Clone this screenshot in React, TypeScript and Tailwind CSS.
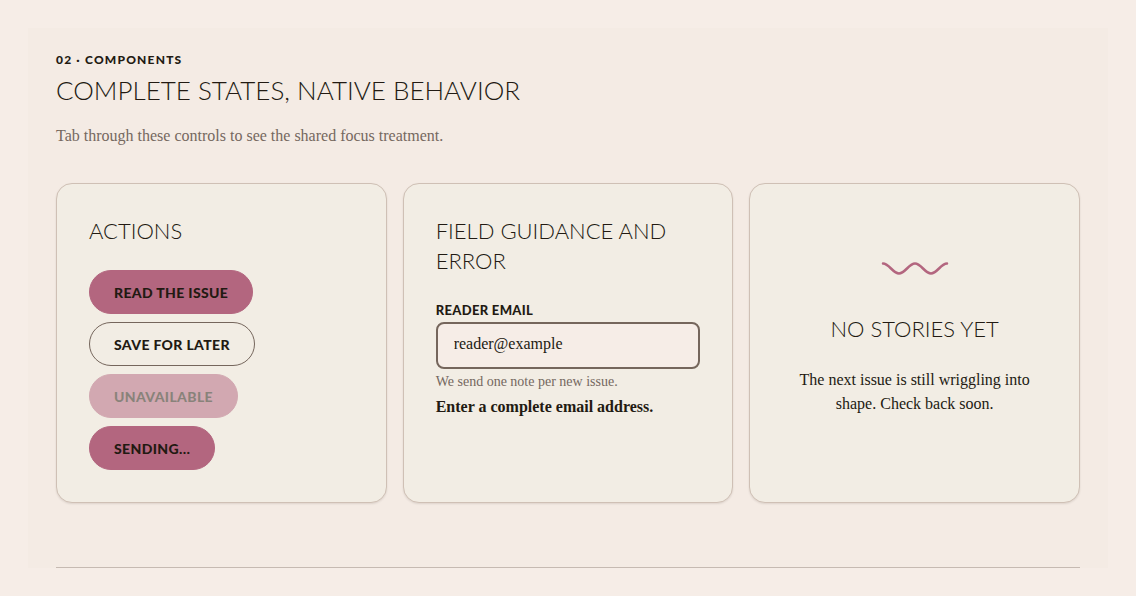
import type { ReactNode } from "react";
import { clsx } from "clsx";

const display = "font-['Lato','Liberation_Sans',sans-serif]";
const serif = "font-['Liberation_Serif',serif]";

type ButtonProps = {
  children: ReactNode;
  variant?: "primary" | "outline";
  disabled?: boolean;
  busy?: boolean;
};

function Button({ children, variant = "primary", disabled, busy }: ButtonProps) {
  return (
    <button
      type="button"
      disabled={disabled}
      aria-busy={busy}
      className={clsx(
        display,
        "h-11 rounded-full border px-6 pt-0.5 text-sm font-black uppercase tracking-wide text-[#221a12] disabled:opacity-50",
        variant === "primary" ? "border-[#b3667f] bg-[#b3667f]" : "border-[#75665c] bg-transparent"
      )}
    >
      {children}
    </button>
  );
}

function Card({ children, className }: { children: ReactNode; className?: string }) {
  return (
    <article
      className={clsx(
        "rounded-2xl border border-[#cfc0b5] bg-[#f2ede4] p-8 shadow-[0_1px_2px_rgba(60,40,30,0.12)]",
        className
      )}
    >
      {children}
    </article>
  );
}

function CardTitle({ children }: { children: ReactNode }) {
  return <h3 className={clsx(display, "text-[22px] leading-[30px] font-light uppercase")}>{children}</h3>;
}

export default function App() {
  return (
    <div className={clsx(serif, "min-h-screen bg-[#f6ede7] p-7 text-[#221a12]")}>
      <main className="bg-[#f4ebe4] px-7">
        <section className="border-b border-[#c6bab2] pt-5 pb-16">
          {/* heading */}
          <p className={clsx(display, "pt-0.5 text-xs leading-5 font-black uppercase tracking-widest")}>
            02 · Components
          </p>
          <h2 className={clsx(display, "text-[26px] leading-10 font-light uppercase")}>
            Complete states, native behavior
          </h2>
          <p className="mt-3.5 text-base leading-6 text-[#75685f]">
            Tab through these controls to see the shared focus treatment.
          </p>

          <div className="mt-[35px] grid grid-cols-1 gap-4 md:grid-cols-3">
            {/* buttons */}
            <Card>
              <CardTitle>Actions</CardTitle>
              <div className="mt-6 flex flex-col items-start gap-2">
                <Button>Read the issue</Button>
                <Button variant="outline">Save for later</Button>
                <Button disabled>Unavailable</Button>
                <Button busy>Sending…</Button>
              </div>
            </Card>

            {/* field */}
            <Card>
              <CardTitle>Field guidance and error</CardTitle>
              <div className="mt-6 flex flex-col gap-0.5">
                <label
                  htmlFor="reader-email"
                  className={clsx(display, "text-[13px] leading-5 font-black uppercase tracking-wide")}
                >
                  Reader email
                </label>
                <input
                  id="reader-email"
                  type="email"
                  defaultValue="reader@example"
                  aria-invalid="true"
                  aria-describedby="reader-help reader-error"
                  className="h-[47px] w-full rounded-lg border-2 border-[#75665c] bg-[#f6ede7] px-4 pb-1 text-base"
                />
                <p id="reader-help" className="text-sm leading-[22px] text-[#75685f]">
                  We send one note per new issue.
                </p>
                <p id="reader-error" className="text-base leading-6 font-bold">
                  Enter a complete email address.
                </p>
              </div>
            </Card>

            {/* empty state */}
            <Card className="flex flex-col items-center justify-center pb-12 text-center">
              <svg
                viewBox="0 0 68 28"
                aria-hidden="true"
                className="mb-8 h-7 w-[68px] fill-none stroke-[#b3667f] stroke-[2.5]"
                strokeLinecap="round"
              >
                <path d="M2 9.5C8 9.5 12 19.5 18 19.5S28 9.5 34 9.5S44 19.5 50 19.5S60 9.5 66 9.5" />
              </svg>
              <CardTitle>No stories yet</CardTitle>
              <p className="mt-6 text-base leading-6">The next issue is still wriggling into shape. Check back soon.</p>
            </Card>
          </div>
        </section>
      </main>
    </div>
  );
}
